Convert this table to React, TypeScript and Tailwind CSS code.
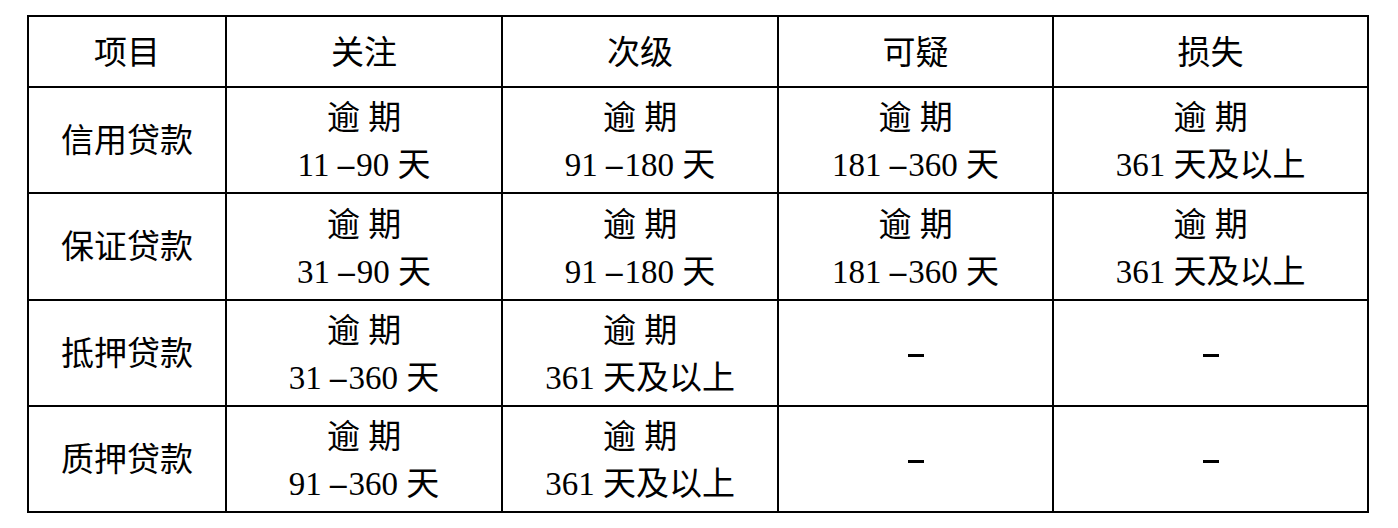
const headers = ['项目', '关注', '次级', '可疑', '损失']

type Range = { from: string; to?: string } | null

const rows: { name: string; cells: Range[]; h: string }[] = [
	{ name: '信用贷款', cells: [{ from: '11', to: '90' }, { from: '91', to: '180' }, { from: '181', to: '360' }, { from: '361' }], h: 'h-[106px]' },
	{ name: '保证贷款', cells: [{ from: '31', to: '90' }, { from: '91', to: '180' }, { from: '181', to: '360' }, { from: '361' }], h: 'h-[107px]' },
	{ name: '抵押贷款', cells: [{ from: '31', to: '360' }, { from: '361' }, null, null], h: 'h-[106px]' },
	{ name: '质押贷款', cells: [{ from: '91', to: '360' }, { from: '361' }, null, null], h: 'h-[106px]' },
]

function Cell({ value }: { value: Range }) {
	if (value === null) {
		return (
			<td className="border-2 border-black text-center align-middle">
				<span className="inline-block h-[3px] w-[16px] bg-black align-middle" />
			</td>
		)
	}
	return (
		<td className="border-2 border-black pt-[4px] text-center align-middle">
			<div className="leading-[47px]">逾 期</div>
			<div className="leading-[47px]">
				{value.to ? (
					<>
						{value.from} <span className="mr-[2px] font-bold">–</span>
						{value.to} 天
					</>
				) : (
					<>{value.from} 天及以上</>
				)}
			</div>
		</td>
	)
}

export default function App() {
	return (
		<div className="h-[528px] w-[1398px] bg-white pl-[27px] pt-[15px] font-[family-name:'Liberation_Serif','Noto_Sans_CJK_SC',serif] text-[33px] text-black">
			<table className="w-[1340px] table-fixed border-collapse">
				<colgroup>
					<col className="w-[198px]" />
					<col className="w-[276px]" />
					<col className="w-[276px]" />
					<col className="w-[275px]" />
					<col className="w-[315px]" />
				</colgroup>
				<thead>
					<tr className="h-[71px]">
						{headers.map((h) => (
							<th key={h} className="border-2 border-black pt-[4px] text-center align-middle font-normal">
								{h}
							</th>
						))}
					</tr>
				</thead>
				<tbody>
					{rows.map((row) => (
						<tr key={row.name} className={row.h}>
							<td className="border-2 border-black pt-[3px] text-center align-middle">{row.name}</td>
							{row.cells.map((c, i) => (
								<Cell key={i} value={c} />
							))}
						</tr>
					))}
				</tbody>
			</table>
		</div>
	)
}
